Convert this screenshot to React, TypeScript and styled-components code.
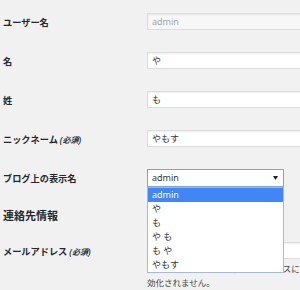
import styled, { createGlobalStyle } from 'styled-components';

const GlobalStyle = createGlobalStyle`
  html, body {
    margin: 0;
    padding: 0;
    background: #f1f1f1;
    overflow: hidden;
  }
  body {
    font-family: "Noto Sans", "Noto Sans CJK JP", sans-serif;
    color: #23282d;
  }
`;

const Page = styled.div`
  width: 300px;
  height: 290px;
  overflow: hidden;
  padding-top: 2px;
  box-sizing: border-box;
`;

const Row = styled.div`
  display: grid;
  grid-template-columns: 147px 200px;
  align-items: center;
  height: 39px;
`;

const EmailRow = styled.div`
  display: grid;
  grid-template-columns: 147px 200px;
  align-items: start;
  padding-top: 9px;
`;

const Label = styled.label<{ offset?: number }>`
  padding-left: 3px;
  margin-top: ${({ offset }) => offset ?? 2}px;
  font-size: 9.2px;
  font-weight: 600;
  line-height: 12px;
  white-space: nowrap;
`;

const Note = styled.span`
  font-size: 8px;
  font-style: italic;
  margin-left: 2px;
`;

const TextInput = styled.input`
  width: 200px;
  height: 17px;
  box-sizing: border-box;
  margin: 0;
  padding: 0 4px;
  border: 1px solid #ddd;
  box-shadow: inset 0 1px 2px rgba(0, 0, 0, 0.07);
  background: #fff;
  color: #32373c;
  font-family: inherit;
  font-size: 9px;
  outline: none;
  display: block;

  &:disabled {
    background: #f7f7f7;
    color: #a0a5aa;
  }
`;

const SelectWrap = styled.div`
  position: relative;
  z-index: 5;
  width: 137px;
`;

const SelectBox = styled.div`
  height: 18px;
  box-sizing: border-box;
  border: 1px solid #7aa3e0;
  background: #fff;
  display: flex;
  align-items: center;
  justify-content: space-between;
  padding: 0 5px 0 4px;
  font-size: 9px;
  color: #32373c;
`;

const OptionList = styled.ul`
  position: absolute;
  top: 18px;
  left: 0;
  width: 137px;
  box-sizing: border-box;
  margin: 0;
  padding: 0;
  list-style: none;
  border: 1px solid #a8b8d8;
  background: #fff;
`;

const Option = styled.li<{ active?: boolean }>`
  height: 14px;
  line-height: 14px;
  padding-left: 4px;
  font-size: 9px;
  white-space: pre;
  background: ${({ active }) => (active ? '#4285f4' : '#fff')};
  color: ${({ active }) => (active ? '#fff' : '#32373c')};
`;

const SectionTitle = styled.h2`
  margin: 0;
  height: 36px;
  display: flex;
  align-items: center;
  padding-left: 3px;
  font-size: 11px;
  font-weight: 700;
  color: #23282d;
`;

const Description = styled.p`
  margin: 3px 0 0;
  font-size: 8.5px;
  line-height: 14px;
  color: #444;
  white-space: nowrap;
`;

const Arrow = () => (
  <svg width="5" height="4" viewBox="0 0 5 4">
    <path d="M0 0 H5 L2.5 4 Z" fill="#222" />
  </svg>
);

const options = ['admin', 'や', 'も', 'や も', 'も や', 'やもす'];

export default function App() {
  return (
    <Page>
      <GlobalStyle />
      <Row>
        <Label>ユーザー名</Label>
        <TextInput defaultValue="admin" disabled />
      </Row>
      <Row>
        <Label>名</Label>
        <TextInput defaultValue="や" readOnly />
      </Row>
      <Row>
        <Label>姓</Label>
        <TextInput defaultValue="も" readOnly />
      </Row>
      <Row>
        <Label>
          ニックネーム<Note>(必須)</Note>
        </Label>
        <TextInput defaultValue="やもす" readOnly />
      </Row>
      <Row>
        <Label>ブログ上の表示名</Label>
        <SelectWrap>
          <SelectBox>
            <span>admin</span>
            <Arrow />
          </SelectBox>
          <OptionList>
            {options.map((o, i) => (
              <Option key={o} active={i === 0}>
                {o}
              </Option>
            ))}
          </OptionList>
        </SelectWrap>
      </Row>
      <SectionTitle>連絡先情報</SectionTitle>
      <EmailRow>
        <Label offset={4}>
          メールアドレス<Note>(必須)</Note>
        </Label>
        <div>
          <TextInput defaultValue="admin@example.com" readOnly />
          <Description>
            変更すると、確認用に新しいアドレスにメールを送信します。新しいアドレスは確認されるまで有
            <br />
            効化されません。
          </Description>
        </div>
      </EmailRow>
    </Page>
  );
}
